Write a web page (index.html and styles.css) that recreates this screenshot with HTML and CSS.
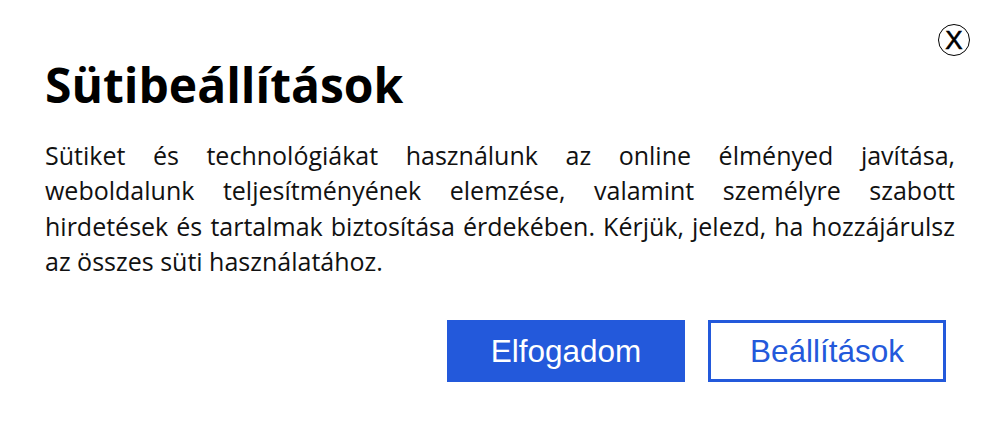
FILE: index.html
```html
<!DOCTYPE html>
<html lang="hu">
<head>
<meta charset="utf-8">
<link rel="stylesheet" href="styles.css">
</head>
<body>
<div class="dialog">
  <div class="top">
    <button class="close" aria-label="Bezárás">X</button>
  </div>
  <h1 class="title">Sütibeállítások</h1>
  <p class="text">Sütiket és technológiákat használunk az online élményed javítása, weboldalunk teljesítményének elemzése, valamint személyre szabott hirdetések és tartalmak biztosítása érdekében. Kérjük, jelezd, ha hozzájárulsz az összes süti használatához.</p>
  <div class="actions">
    <button class="btn primary">Elfogadom</button>
    <button class="btn secondary">Beállítások</button>
  </div>
</div>
</body>
</html>
```
FILE: styles.css
```css
html, body {
  margin: 0;
  padding: 0;
  background: #fff;
}
.dialog {
  width: 1000px;
  height: 446px;
  box-sizing: border-box;
  padding: 24px 45px 0 45px;
  font-family: "Open Sans", sans-serif;
  color: #000;
}
.top {
  display: flex;
  justify-content: flex-end;
  margin-right: -15px;
  height: 30px;
}
.close {
  width: 32px;
  height: 32px;
  box-sizing: border-box;
  border: 1px solid #000;
  border-radius: 50%;
  background: #fff;
  padding: 0;
  font-family: "Liberation Sans", sans-serif;
  font-size: 26px;
  line-height: 30px;
  color: #000;
  text-align: center;
  -webkit-text-stroke: 0.6px #000;
}
.title {
  margin: 1px 0 0 0;
  font-size: 48px;
  font-weight: 700;
  line-height: 60px;
}
.text {
  margin: 23px 0 0 0;
  font-size: 25px;
  line-height: 35.3px;
  text-align: justify;
  color: #111;
}
.actions {
  display: flex;
  justify-content: flex-end;
  gap: 23px;
  margin-top: 41px;
  margin-right: 9px;
}
.btn {
  width: 238px;
  height: 62px;
  box-sizing: border-box;
  font-family: "Liberation Sans", sans-serif;
  font-size: 31.5px;
  padding: 0;
  border: 3px solid #2359db;
  cursor: pointer;
}
.primary {
  background: #2359db;
  color: #fff;
}
.secondary {
  background: #fff;
  color: #2359db;
}
```
